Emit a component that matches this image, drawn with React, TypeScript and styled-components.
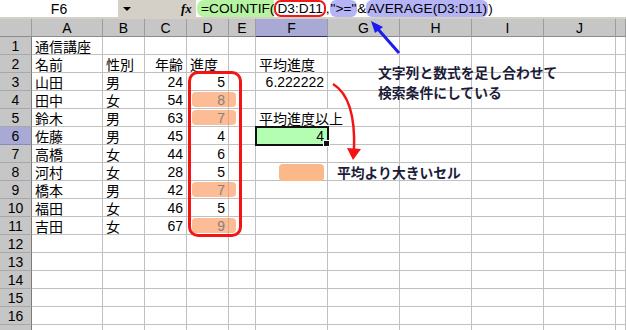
import React from "react";
import styled, { createGlobalStyle, css } from "styled-components";

const Global = createGlobalStyle`
  html, body { margin: 0; padding: 0; background: #fff; }
  body {
    width: 626px; height: 330px; overflow: hidden;
    font-family: "Liberation Sans", "Noto Sans CJK JP", sans-serif;
  }
`;

const Page = styled.div`
  position: relative;
  width: 626px;
  height: 330px;
  overflow: hidden;
  background: #fff;
`;

/* ---------- formula bar ---------- */
const FormulaBar = styled.div`
  display: flex;
  height: 19px;
  box-sizing: border-box;
  padding-bottom: 2px;
  background: #d4d0c8;
`;

const NameBox = styled.div`
  width: 118px;
  background: #fff;
  display: flex;
  align-items: center;
  justify-content: center;
  font-size: 14px;
  color: #000;
`;

const DropArea = styled.div`
  width: 63px;
  display: flex;
  align-items: center;
  padding-left: 5px;
  box-sizing: border-box;
`;

const DropArrow = styled.span`
  width: 0;
  height: 0;
  border-left: 4px solid transparent;
  border-right: 4px solid transparent;
  border-top: 4px solid #000;
`;

const Fx = styled.div`
  width: 15px;
  display: flex;
  align-items: center;
  font-family: "Liberation Serif", serif;
  font-style: italic;
  font-weight: bold;
  font-size: 13px;
  color: #000;
`;

const FormulaInput = styled.div`
  flex: 1;
  background: #fff;
  display: flex;
  align-items: center;
  padding-left: 1px;
  font-size: 13.7px;
  white-space: nowrap;
  color: #000;
`;

const Tok = styled.span<{ $kind?: "green" | "lav" | "red" }>`
  display: inline-flex;
  align-items: center;
  height: 17px;
  box-sizing: border-box;
  ${(p) =>
    p.$kind === "green" &&
    css`
      background: #b6f4a4;
      border-radius: 7px 0 0 7px;
      padding: 0 0 0 4px;
    `}
  ${(p) =>
    p.$kind === "lav" &&
    css`
      background: #b4b4f6;
      border-radius: 6px;
      padding: 0 1px;
    `}
  ${(p) =>
    p.$kind === "red" &&
    css`
      border: 2px solid #f01818;
      border-radius: 7px;
      padding: 0 1px;
    `}
`;

/* ---------- sheet ---------- */
const Sheet = styled.div`
  display: grid;
  grid-template-columns: 32px 71px 42px 42px 42px 27px repeat(5, 72px) 1fr;
  grid-auto-rows: 18px;
  font-size: 14px;
  color: #000;
`;

const Head = styled.div<{ $active?: boolean }>`
  box-sizing: border-box;
  background: ${(p) => (p.$active ? "#a9a9d6" : "#c6c6c6")};
  border-right: 1px solid #9c9c9c;
  border-bottom: 1px solid ${(p) => (p.$active ? "#303050" : "#8c8c8c")};
  display: flex;
  align-items: center;
  justify-content: center;
  font-size: 14px;
`;

const RowHead = styled(Head)`
  border-right: 1px solid #7c7c7c;
  border-bottom: 1px solid ${(p) => (p.$active ? "#8a8ab4" : "#a8a8a8")};
`;

const Cell = styled.div<{
  $right?: boolean;
  $hl?: boolean;
  $sel?: boolean;
  $over?: boolean;
}>`
  position: relative;
  box-sizing: border-box;
  border-right: ${(p) => (p.$over ? "1px solid transparent" : "1px solid #c0c0c0")};
  border-bottom: 1px solid #c0c0c0;
  display: flex;
  align-items: center;
  justify-content: ${(p) => (p.$right ? "flex-end" : "flex-start")};
  padding: 0 3px 0 3px;
  white-space: nowrap;
  overflow: visible;
  z-index: ${(p) => (p.$over ? 1 : "auto")};
  ${(p) =>
    p.$hl &&
    css`
      color: #8a8078;
      &::before {
        content: "";
        position: absolute;
        left: 5px;
        right: -8px;
        top: 1px;
        bottom: 1px;
        border-radius: 4px;
        background: rgba(250, 148, 86, 0.62);
      }
    `}
  ${(p) =>
    p.$sel &&
    css`
      background: #b4feb4;
      outline: 2px solid #111;
      outline-offset: -1px;
      z-index: 2;
      &::after {
        content: "";
        position: absolute;
        right: -3px;
        bottom: -3px;
        width: 5px;
        height: 5px;
        background: #111;
        border: 1px solid #fff;
      }
    `}
`;

const CellText = styled.span<{ $left?: boolean }>`
  position: relative;
  margin-right: ${(p) => (p.$left ? "auto" : "0")};
`;

/* ---------- overlays ---------- */
const RedFrame = styled.div`
  position: absolute;
  left: 188px;
  top: 71px;
  width: 54px;
  height: 166px;
  box-sizing: border-box;
  border: 3px solid #f41414;
  border-radius: 10px;
  pointer-events: none;
`;

const Note = styled.div<{ $x: number; $y: number }>`
  position: absolute;
  left: ${(p) => p.$x}px;
  top: ${(p) => p.$y}px;
  font-family: "Noto Sans CJK JP", sans-serif;
  font-weight: bold;
  font-size: 13.8px;
  line-height: 20px;
  color: #1c1c38;
  white-space: nowrap;
`;

const Swatch = styled.div`
  position: absolute;
  left: 279px;
  top: 164px;
  width: 45px;
  height: 17px;
  border-radius: 4px;
  background: #fbb98a;
`;

const Arrows = styled.svg`
  position: absolute;
  left: 0;
  top: 0;
  pointer-events: none;
`;

type Row = {
  a?: string;
  b?: string;
  c?: string;
  d?: string;
  dLeft?: boolean;
  hl?: boolean;
  f?: string;
  fRight?: boolean;
  fOver?: boolean;
  fSel?: boolean;
};

const rows: Row[] = [
  { a: "通信講座" },
  { a: "名前", b: "性別", c: "年齢", d: "進度", dLeft: true, f: "平均進度" },
  { a: "山田", b: "男", c: "24", d: "5", f: "6.222222", fRight: true },
  { a: "田中", b: "女", c: "54", d: "8", hl: true },
  { a: "鈴木", b: "男", c: "63", d: "7", hl: true, f: "平均進度以上", fOver: true },
  { a: "佐藤", b: "男", c: "45", d: "4", f: "4", fRight: true, fSel: true },
  { a: "高橋", b: "女", c: "44", d: "6" },
  { a: "河村", b: "女", c: "28", d: "5" },
  { a: "橋本", b: "男", c: "42", d: "7", hl: true },
  { a: "福田", b: "女", c: "46", d: "5" },
  { a: "吉田", b: "女", c: "67", d: "9", hl: true },
  {}, {}, {}, {}, {}, {},
];

const letters = ["A", "B", "C", "D", "E", "F", "G", "H", "I", "J", ""];

export default function App() {
  return (
    <Page>
      <Global />
      <FormulaBar>
        <NameBox>F6</NameBox>
        <DropArea>
          <DropArrow />
        </DropArea>
        <Fx>fx</Fx>
        <FormulaInput>
          <Tok $kind="green">=COUNTIF(</Tok>
          <Tok $kind="red">D3:D11</Tok>
          <Tok>,</Tok>
          <Tok $kind="lav">"&gt;="</Tok>
          <Tok>&amp;</Tok>
          <Tok $kind="lav">AVERAGE(D3:D11)</Tok>
          <Tok>)</Tok>
        </FormulaInput>
      </FormulaBar>
      <Sheet>
        <Head />
        {letters.map((l, i) => (
          <Head key={i} $active={l === "F"}>
            {l}
          </Head>
        ))}
        {rows.map((r, i) => (
          <React.Fragment key={i}>
            <RowHead $active={i === 5}>{i < 16 ? i + 1 : ""}</RowHead>
            <Cell>{r.a}</Cell>
            <Cell>{r.b}</Cell>
            <Cell $right>{r.c}</Cell>
            <Cell $right $hl={r.hl}>
              {r.d ? <CellText $left={r.dLeft}>{r.d}</CellText> : null}
            </Cell>
            <Cell />
            <Cell $right={r.fRight} $over={r.fOver} $sel={r.fSel}>
              {r.f}
            </Cell>
            <Cell />
            <Cell />
            <Cell />
            <Cell />
            <Cell />
          </React.Fragment>
        ))}
      </Sheet>

      <RedFrame />
      <Swatch />
      <Note $x={378} $y={62}>文字列と数式を足し合わせて</Note>
      <Note $x={378} $y={82}>検索条件にしている</Note>
      <Note $x={337} $y={162}>平均より大きいセル</Note>

      <Arrows width="626" height="330" viewBox="0 0 626 330">
        <line x1="399" y1="53" x2="377" y2="28" stroke="#1c1cf0" strokeWidth="3" />
        <polygon points="371,21 383,27 375,33" fill="#1c1cf0" />
        <path d="M 333 84 Q 356 98 354 150" fill="none" stroke="#f41414" strokeWidth="2.5" />
        <polygon points="347,148 361,149 353,160" fill="#f41414" />
      </Arrows>
    </Page>
  );
}
